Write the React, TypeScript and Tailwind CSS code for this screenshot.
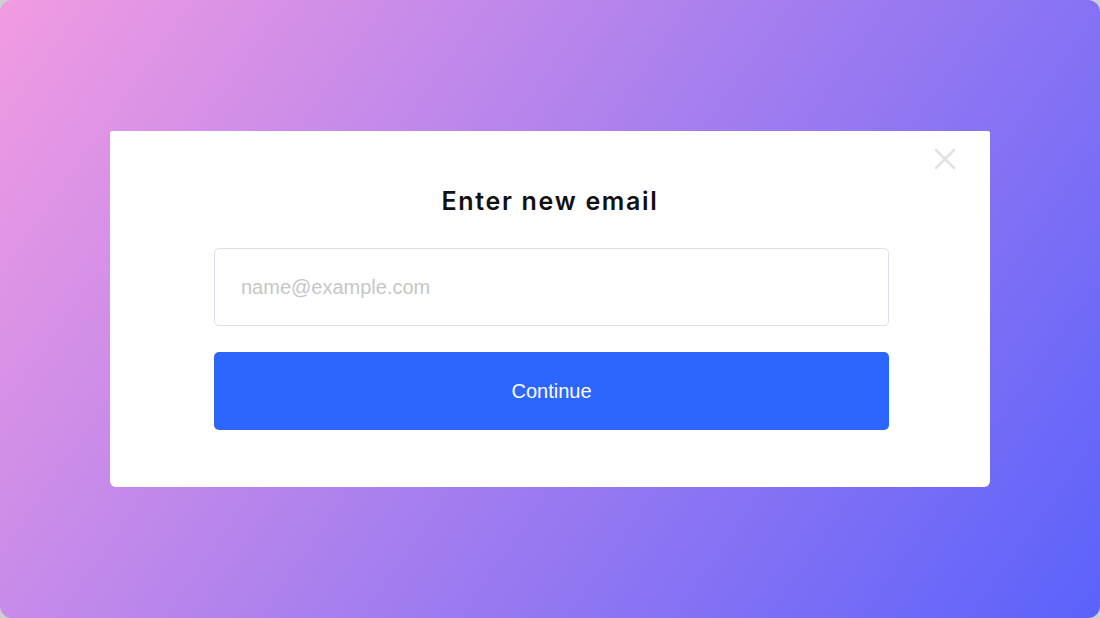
import React, { useState } from 'react';

const App = () => {
  const [email, setEmail] = useState('');

  return (
    <div className="w-[1100px] h-[618px] bg-[#cfcfcf]">
      <div className="w-full h-full rounded-[12px] bg-[linear-gradient(125deg,#f29be2,#5b62fb)] flex items-center justify-center">
        <div className="relative w-[880px] h-[356px] bg-white rounded-t-[2px] rounded-b-[6px] pt-[54px]">
          <button className="absolute right-[33px] top-[16px] w-[24px] h-[24px] flex items-center justify-center" aria-label="Close">
            <svg width="22" height="22" viewBox="0 0 22 22" fill="none" stroke="#e2e2e2" strokeWidth="2.6" strokeLinecap="round">
              <path d="M2 2 L20 20" />
              <path d="M20 2 L2 20" />
            </svg>
          </button>
          <h2 className="text-center text-[25px] leading-[33px] font-semibold tracking-[1.7px] text-[#111] font-['Inter','Noto_Sans',sans-serif]">
            Enter new email
          </h2>
          <div className="w-[675px] ml-[104px] mt-[30px] flex flex-col gap-[26px]">
            <input
              type="email"
              value={email}
              onChange={(e) => setEmail(e.target.value)}
              placeholder="name@example.com"
              className="w-full h-[78px] rounded-[5px] border border-[#dddcf0] px-[26px] text-[20px] text-[#333] placeholder:text-[#c6c6c6] outline-none font-['Liberation_Sans',Arial,sans-serif]"
            />
            <button className="w-full h-[78px] rounded-[5px] bg-[#2d66ff] text-white text-[20px] font-['Liberation_Sans',Arial,sans-serif]">
              Continue
            </button>
          </div>
        </div>
      </div>
    </div>
  );
};

export default App;
